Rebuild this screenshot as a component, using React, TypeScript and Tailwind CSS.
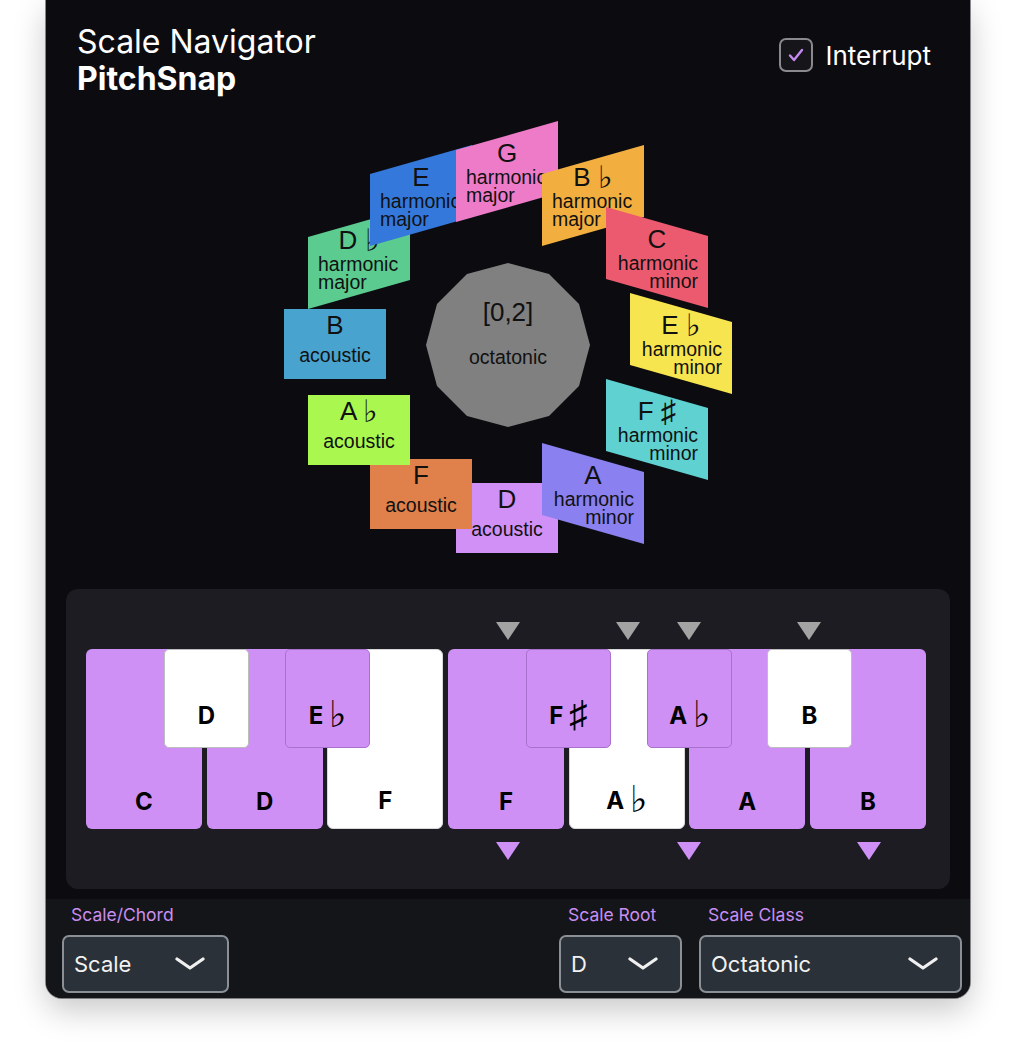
import React from "react";

type Skew = "neg" | "pos" | "none";
type CardT = {
  note: string;
  acc?: string;
  lines: string[];
  color: string;
  pos: string;
  skew: Skew;
};

const cards: CardT[] = [
  { note: "D", acc: "♭", lines: ["harmonic", "major"], color: "bg-[#5bcb8f]", pos: "left-[30px] top-[98px]", skew: "neg" },
  { note: "E", lines: ["harmonic", "major"], color: "bg-[#3478dc]", pos: "left-[92px] top-[35px]", skew: "neg" },
  { note: "G", lines: ["harmonic", "major"], color: "bg-[#ee7bc8]", pos: "left-[178px] top-[11px]", skew: "neg" },
  { note: "B", acc: "♭", lines: ["harmonic", "major"], color: "bg-[#f2ae3f]", pos: "left-[264px] top-[35px]", skew: "neg" },
  { note: "C", lines: ["harmonic", "minor"], color: "bg-[#ec5a6f]", pos: "left-[328px] top-[97px]", skew: "pos" },
  { note: "E", acc: "♭", lines: ["harmonic", "minor"], color: "bg-[#f7e54f]", pos: "left-[352px] top-[183px]", skew: "pos" },
  { note: "F", acc: "♯", lines: ["harmonic", "minor"], color: "bg-[#5ed1d0]", pos: "left-[328px] top-[269px]", skew: "pos" },
  { note: "D", lines: ["acoustic"], color: "bg-[#d190f6]", pos: "left-[178px] top-[373px]", skew: "none" },
  { note: "A", lines: ["harmonic", "minor"], color: "bg-[#8a80ef]", pos: "left-[264px] top-[333px]", skew: "pos" },
  { note: "F", lines: ["acoustic"], color: "bg-[#e0804a]", pos: "left-[92px] top-[349px]", skew: "none" },
  { note: "A", acc: "♭", lines: ["acoustic"], color: "bg-[#aaf84f]", pos: "left-[30px] top-[285px]", skew: "none" },
  { note: "B", lines: ["acoustic"], color: "bg-[#49a3cf]", pos: "left-[6px] top-[199px]", skew: "none" },
];

function Card({ c }: { c: CardT }) {
  const shape =
    c.skew === "neg"
      ? "h-[101px] [clip-path:polygon(0_29px,100%_0,100%_72px,0_101px)] pt-[18px]"
      : c.skew === "pos"
      ? "h-[101px] [clip-path:polygon(0_0,100%_29px,100%_101px,0_72px)] pt-[18px]"
      : "h-[70px] pt-[2px]";
  const align =
    c.skew === "neg" ? "text-left mt-[1px]" : c.skew === "pos" ? "text-right mt-[1px]" : "text-center mt-[7px]";
  return (
    <div
      className={`absolute ${c.pos} ${c.color} ${shape} w-[102px] flex flex-col text-[#111] font-['Liberation_Sans','DejaVu_Sans',sans-serif]`}
    >
      <div className="text-center text-[26px] leading-[28px] whitespace-nowrap">
        {c.note}
        {c.acc && (
          <>
            {" "}
            <span className="relative top-[2px] text-[31px] leading-[0px] font-extralight font-['DejaVu_Sans',sans-serif]">
              {c.acc}
            </span>
          </>
        )}
      </div>
      <div className={`${align} px-[10px] text-[19.5px] leading-[18px] whitespace-nowrap`}>
        {c.lines.map((l) => (
          <div key={l}>{l}</div>
        ))}
      </div>
    </div>
  );
}

function Arrow({ color, cls }: { color: string; cls: string }) {
  return (
    <svg className={`absolute top-0 ${cls}`} width="24" height="18" viewBox="0 0 24 18">
      <polygon points="0,0 24,0 12,18" fill={color} />
    </svg>
  );
}

function KeyLabel({ n, acc }: { n: string; acc?: string }) {
  return (
    <span className="text-[24px] leading-[24px] font-bold text-black font-['Inter','DejaVu_Sans',sans-serif] whitespace-nowrap">
      {n}
      {acc && (
        <>
          {" "}
          <span className="relative top-[3px] font-extralight text-[37px] leading-[0px] font-['DejaVu_Sans',sans-serif]">
            {acc}
          </span>
        </>
      )}
    </span>
  );
}

const whiteKeys = [
  { n: "C", purple: true },
  { n: "D", purple: true },
  { n: "F", purple: false },
  { n: "F", purple: true },
  { n: "A", acc: "♭", purple: false },
  { n: "A", purple: true },
  { n: "B", purple: true },
];

const blackKeys = [
  { n: "D", purple: false, pos: "left-[78px]" },
  { n: "E", acc: "♭", purple: true, pos: "left-[199px]" },
  { n: "F", acc: "♯", purple: true, pos: "left-[440px]" },
  { n: "A", acc: "♭", purple: true, pos: "left-[561px]" },
  { n: "B", purple: false, pos: "left-[681px]" },
];

function Select({ label, value, width }: { label: string; value: string; width: string }) {
  return (
    <div className={`flex flex-col ${width}`}>
      <div className="ml-[9px] h-[22px] leading-[22px] text-[17.5px] text-[#c98ef2] mb-[9px]">{label}</div>
      <div className="h-[58px] rounded-[7px] border-2 border-[#8b9097] bg-[#2a3138] flex items-center justify-between pl-[10px] pr-[22px]">
        <span className="text-[22px] text-[#f2f2f2]">{value}</span>
        <svg width="30" height="14" viewBox="0 0 30 14">
          <polyline points="2,2 15,11 28,2" fill="none" stroke="#f0f0f0" strokeWidth="3.2" strokeLinecap="round" strokeLinejoin="round" />
        </svg>
      </div>
    </div>
  );
}

export default function App() {
  return (
    <div className="w-full h-[1053px] bg-white font-['Inter',sans-serif]">
      <div className="mx-auto w-[924px] h-[998px] bg-[#0c0c10] rounded-b-[16px] overflow-hidden flex flex-col shadow-[0_0_0_1px_rgba(90,90,95,0.7),0_12px_32px_rgba(0,0,0,0.22)]">
        {/* Header */}
        <div className="h-[110px] flex justify-between pl-[31px] pr-[39px] pt-[23px]">
          <div className="text-white text-[32px] leading-[37px]">
            <div>Scale Navigator</div>
            <div className="font-bold">PitchSnap</div>
          </div>
          <div className="flex items-center gap-[12px] h-[34px] mt-[15px]">
            <div className="w-[34px] h-[34px] rounded-[7px] border-2 border-[#8a8a8e] bg-[#15151a] flex items-center justify-center">
              <svg width="16" height="14" viewBox="0 0 16 14">
                <polyline points="2,7.5 6,12 14,2" fill="none" stroke="#c58af0" strokeWidth="2.4" strokeLinecap="round" strokeLinejoin="round" />
              </svg>
            </div>
            <span className="text-white text-[26px]">Interrupt</span>
          </div>
        </div>

        {/* Wheel */}
        <div className="relative mx-auto w-[460px] h-[460px] shrink-0">
          <svg className="absolute left-[148px] top-[153px]" width="164" height="164" viewBox="0 0 164 164">
            <polygon
              points="82,0 123,11 153,41 164,82 153,123 123,153 82,164 41,153 11,123 0,82 11,41 41,11"
              fill="#808080"
            />
          </svg>
          <div className="absolute left-[148px] top-[153px] w-[164px] h-[164px] flex flex-col items-center pt-[34px] text-[#111] font-['Liberation_Sans',sans-serif]">
            <div className="text-[26px] leading-[30px]">[0,2]</div>
            <div className="text-[19.5px] leading-[20px] mt-[20px]">octatonic</div>
          </div>
          {cards.map((c) => (
            <Card key={c.note + (c.acc ?? "") + c.lines[1]} c={c} />
          ))}
        </div>

        {/* Keyboard panel */}
        <div className="mx-[20px] mt-[19px] h-[300px] rounded-[12px] bg-[#1c1c22] pl-[20px] pt-[33px] shrink-0">
          <div className="w-[840px]">
            <div className="relative h-[18px]">
              <Arrow color="#a3a3a3" cls="left-[410px]" />
              <Arrow color="#a3a3a3" cls="left-[530px]" />
              <Arrow color="#a3a3a3" cls="left-[591px]" />
              <Arrow color="#a3a3a3" cls="left-[711px]" />
            </div>
            <div className="relative mt-[9px] h-[180px] grid grid-cols-7 gap-[4.67px]">
              {whiteKeys.map((k, i) => (
                <div
                  key={i}
                  className={`h-[180px] rounded-[6px] flex items-end justify-center pb-[15px] ${
                    k.purple ? "bg-[#cf90f6]" : "bg-white border border-[#d8d8d8]"
                  }`}
                >
                  <KeyLabel n={k.n} acc={k.acc} />
                </div>
              ))}
              {blackKeys.map((k, i) => (
                <div
                  key={i}
                  className={`absolute top-0 ${k.pos} w-[85px] h-[99px] rounded-[5px] border flex items-end justify-center pb-[19px] ${
                    k.purple ? "bg-[#cf90f6] border-[#a872cc]" : "bg-white border-[#bdbdbd]"
                  }`}
                >
                  <KeyLabel n={k.n} acc={k.acc} />
                </div>
              ))}
            </div>
            <div className="relative mt-[13px] h-[18px]">
              <Arrow color="#cf90f6" cls="left-[410px]" />
              <Arrow color="#cf90f6" cls="left-[591px]" />
              <Arrow color="#cf90f6" cls="left-[771px]" />
            </div>
          </div>
        </div>

        {/* Bottom controls */}
        <div className="mt-[10px] flex-1 bg-[#141519] flex pl-[16px] pr-[8px] pt-[5px]">
          <Select label="Scale/Chord" value="Scale" width="w-[167px]" />
          <div className="flex-1" />
          <Select label="Scale Root" value="D" width="w-[123px]" />
          <div className="w-[17px]" />
          <Select label="Scale Class" value="Octatonic" width="w-[263px]" />
        </div>
      </div>
    </div>
  );
}
